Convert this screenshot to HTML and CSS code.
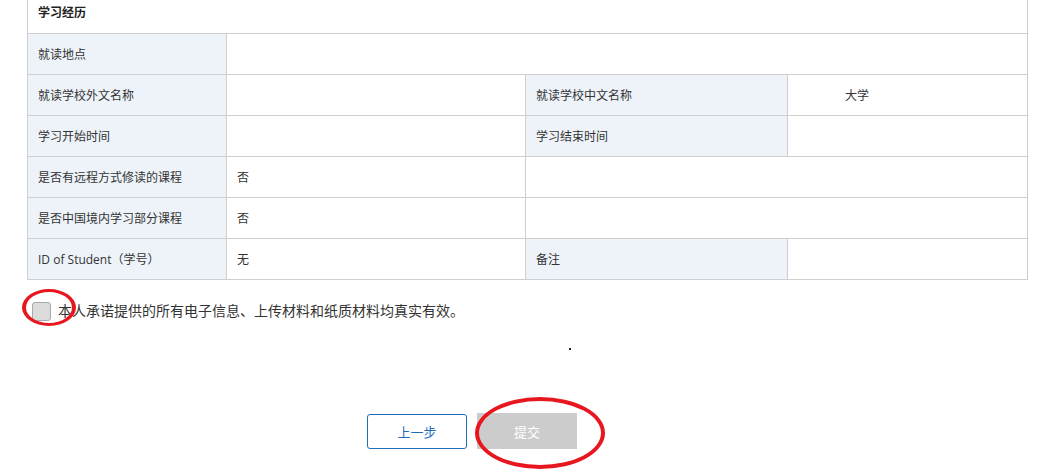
FILE: index.html
```html
<!DOCTYPE html>
<html lang="zh-CN">

<head>
  <meta charset="UTF-8">
  <title>学习经历</title>
  <meta name="viewport" content="width=device-width, initial-scale=1.0">
  <link rel="stylesheet" href="styles.css">
</head>

<body>

  <div class="page">
    <table class="info-table">
      <colgroup>
        <col class="col-label">
        <col class="col-value">
        <col class="col-label2">
        <col class="col-value2">
      </colgroup>
      <tr>
        <th class="section-title" colspan="4">学习经历</th>
      </tr>
      <tr>
        <td class="label">就读地点</td>
        <td colspan="3"></td>
      </tr>
      <tr>
        <td class="label">就读学校外文名称</td>
        <td></td>
        <td class="label">就读学校中文名称</td>
        <td><span class="school-name">大学</span></td>
      </tr>
      <tr>
        <td class="label">学习开始时间</td>
        <td></td>
        <td class="label">学习结束时间</td>
        <td></td>
      </tr>
      <tr>
        <td class="label">是否有远程方式修读的课程</td>
        <td>否</td>
        <td colspan="2"></td>
      </tr>
      <tr>
        <td class="label">是否中国境内学习部分课程</td>
        <td>否</td>
        <td colspan="2"></td>
      </tr>
      <tr>
        <td class="label">ID of Student（学号）</td>
        <td>无</td>
        <td class="label">备注</td>
        <td></td>
      </tr>
    </table>

    <div class="pledge">
      <span class="checkbox"></span>
      <span class="pledge-text">本人承诺提供的所有电子信息、上传材料和纸质材料均真实有效。</span>
      <span class="mark mark-check"></span>
    </div>

    <div class="dot-row"><span class="dot"></span></div>

    <div class="actions">
      <button class="btn btn-prev">上一步</button>
      <button class="btn btn-submit" disabled>提交</button>
      <span class="mark mark-submit"></span>
    </div>
  </div>

</body>

</html>
```

FILE: styles.css
```css
:root {
  --line: #cfcfcf;
  --label-bg: #eef3fa;
  --text: #333;
  --blue: #1f6db8;
  --mark: #e8161f;
}

* {
  box-sizing: border-box;
  margin: 0;
  padding: 0;
}

body {
  font-family: "Open Sans", "Noto Sans CJK SC", sans-serif;
  color: var(--text);
  background: #fff;
}

.page {
  padding-left: 27px;
  width: 1057px;
  height: 470px;
  overflow: hidden;
}

.info-table {
  width: 1000px;
  border-collapse: collapse;
  table-layout: fixed;
  font-size: 12px;
}

.col-label {
  width: 199px;
}

.col-value {
  width: 299px;
}

.col-label2 {
  width: 262px;
}

.col-value2 {
  width: 240px;
}

.info-table th,
.info-table td {
  border: 1px solid var(--line);
  height: 41px;
  padding: 2px 10px 0;
  text-align: left;
  vertical-align: middle;
  font-weight: normal;
  line-height: 18px;
}

.info-table .section-title {
  border-top: none;
  height: 33px;
  padding: 4px 10px 11px;
  font-weight: bold;
  color: #222;
}

.info-table .label {
  background: var(--label-bg);
}

.school-name {
  margin-left: 47px;
}

.pledge {
  position: relative;
  display: flex;
  align-items: center;
  gap: 7px;
  margin-top: 21px;
  padding-left: 5px;
  font-size: 14px;
  line-height: 20px;
}

.checkbox {
  width: 19px;
  height: 19px;
  border: 1px solid #a9a9a9;
  border-radius: 3px;
  background: #dcdcdc;
}

.mark {
  position: absolute;
  border: 3px solid var(--mark);
  border-radius: 50%;
}

.mark-check {
  left: -5px;
  top: -12px;
  width: 54px;
  height: 37px;
  border-width: 3px 4px;
}

.dot-row {
  height: 2px;
  margin-top: 27px;
  padding-left: 542px;
}

.dot {
  display: block;
  width: 2px;
  height: 2px;
  background: #222;
}

.actions {
  position: relative;
  display: flex;
  gap: 10px;
  margin-top: 64px;
  padding-left: 340px;
}

.btn {
  width: 100px;
  height: 35px;
  font-family: "Noto Sans CJK SC", sans-serif;
  font-size: 13px;
  border-radius: 3px;
  cursor: pointer;
}

.btn-prev {
  background: #fff;
  color: var(--blue);
  border: 1px solid var(--blue);
}

.btn-submit {
  background: #cccccc;
  color: #fff;
  border: none;
  border-radius: 0;
  height: 36px;
  margin-top: -1px;
}

.mark-submit {
  left: 448px;
  top: -17px;
  width: 130px;
  height: 72px;
  border-width: 4px;
}
```
